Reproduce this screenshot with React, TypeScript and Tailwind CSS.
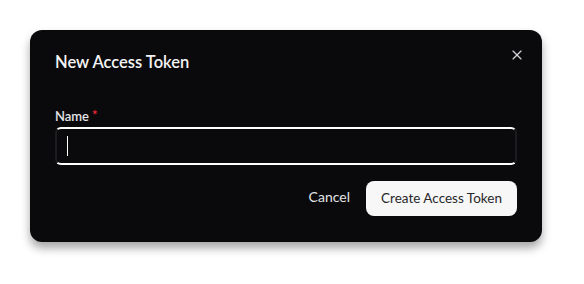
import { X } from "lucide-react";

export default function App() {
  return (
    <div
      className="flex h-[284px] w-[584px] items-start bg-white pl-[30px] pt-[30px]"
      style={{ fontFamily: "Lato, 'Noto Sans', sans-serif" }}
    >
      <div className="relative flex h-[212px] w-[512px] flex-col rounded-[12px] bg-[#0a0a0c] px-[25px] pt-[21px] shadow-[0_6px_10px_rgba(0,0,0,0.35)]">
        <button className="absolute right-[17px] top-[17px] text-zinc-300">
          <X className="h-[16px] w-[16px]" strokeWidth={1.75} />
        </button>

        {/* ── Header ── */}
        <h2 className="text-[16.5px] font-semibold leading-[22px] text-zinc-100">New Access Token</h2>

        {/* ── Name field ── */}
        <label className="mt-[35px] flex items-start text-[13px] font-semibold leading-[16px] text-zinc-200">
          Name
          <span className="ml-[3px] mt-[1px] text-[13px] leading-[12px] text-red-500">*</span>
        </label>
        <div className="mt-[3px] flex h-[38px] items-center rounded-[6px] border-x-2 border-y-2 border-x-[#1c1c20] border-y-white px-[10px]">
          <div className="h-[20px] w-px bg-white" />
        </div>

        {/* ── Actions ── */}
        <div className="mt-[16px] flex items-center justify-end gap-[16px]">
          <button className="pb-[4px] text-[14px] text-zinc-200">Cancel</button>
          <button className="h-[35px] w-[151px] rounded-[8px] bg-[#f7f7f8] text-[13.5px] text-zinc-800">
            Create Access Token
          </button>
        </div>
      </div>
    </div>
  );
}
